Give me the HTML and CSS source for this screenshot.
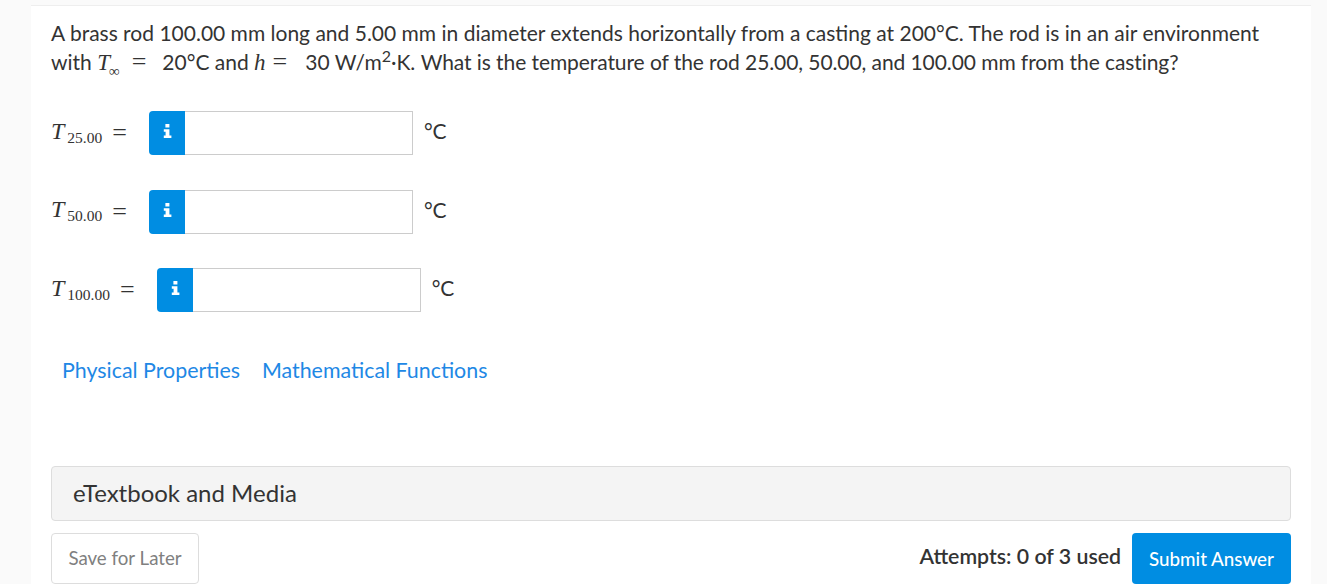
FILE: index.html
```html
<!DOCTYPE html>
<html lang="en">
<head>
    <meta charset="UTF-8">
    <meta name="viewport" content="width=device-width, initial-scale=1.0">
    <title>Question</title>
    <link rel="stylesheet" href="styles.css">
</head>
<body>
    <div class="question-card">
        <p class="question-text">A brass rod 100.00 mm long and 5.00 mm in diameter extends horizontally from a casting at 200°C. The rod is in an air environment<br>with <span class="math"><i>T</i><sub class="inf">∞</sub></span><span class="eq">=</span>20°C and <i class="math">h</i><span class="eq eq-h">=</span>30 W/m<sup>2</sup>·K. <span class="tail">What is the temperature of the rod 25.00, 50.00, and 100.00 mm from the casting?</span></p>

        <div class="answers">
            <div class="answer-row">
                <span class="label"><i>T</i><sub>25.00</sub></span>
                <span class="label-eq">=</span>
                <button class="info-btn"><svg viewBox="0 0 9 14" width="9" height="14"><path d="M2.4 0h4v3.4h-4zM.8 5.2h5.6v6.3h2v2.5H.8v-2.5h1.8V7.7H.8z" fill="#fff"/></svg></button>
                <input class="answer-input" type="text">
                <span class="unit">°C</span>
            </div>
            <div class="answer-row">
                <span class="label"><i>T</i><sub>50.00</sub></span>
                <span class="label-eq">=</span>
                <button class="info-btn"><svg viewBox="0 0 9 14" width="9" height="14"><path d="M2.4 0h4v3.4h-4zM.8 5.2h5.6v6.3h2v2.5H.8v-2.5h1.8V7.7H.8z" fill="#fff"/></svg></button>
                <input class="answer-input" type="text">
                <span class="unit">°C</span>
            </div>
            <div class="answer-row">
                <span class="label"><i>T</i><sub>100.00</sub></span>
                <span class="label-eq">=</span>
                <button class="info-btn"><svg viewBox="0 0 9 14" width="9" height="14"><path d="M2.4 0h4v3.4h-4zM.8 5.2h5.6v6.3h2v2.5H.8v-2.5h1.8V7.7H.8z" fill="#fff"/></svg></button>
                <input class="answer-input" type="text">
                <span class="unit">°C</span>
            </div>
        </div>

        <div class="links">
            <a href="#">Physical Properties</a>
            <a href="#">Mathematical Functions</a>
        </div>

        <div class="media-panel">eTextbook and Media</div>

        <div class="footer">
            <button class="save-btn">Save for Later</button>
            <div class="submit-group">
                <span class="attempts">Attempts: 0 of 3 used</span>
                <button class="submit-btn">Submit Answer</button>
            </div>
        </div>
    </div>
</body>
</html>
```

FILE: styles.css
```css
* {
    margin: 0;
    padding: 0;
    box-sizing: border-box;
}

html, body {
    height: 584px;
    overflow: hidden;
}

body {
    background: #fafafa;
    font-family: Lato, sans-serif;
    color: #333;
    padding: 5px 16px 0 31px;
}

.question-card {
    background: #fff;
    border-top: 1px solid #eee;
    padding: 12px 20px 0;
    height: 579px;
}

.question-text {
    font-size: 21px;
    line-height: 29px;
    white-space: nowrap;
}

.question-text sup {
    font-size: 16px;
    line-height: 0;
}

.tail {
    letter-spacing: -0.08px;
}

.math {
    font-family: "Liberation Serif", serif;
    font-size: 23px;
}

.inf {
    font-size: 15px;
    line-height: 0;
    margin-left: -1px;
}

.eq {
    font-family: "Liberation Serif", serif;
    font-size: 26px;
    line-height: 0;
    margin: 0 16px 0 12px;
}

.eq-h {
    margin: 0 18px 0 7px;
}

.answers {
    margin-top: 34px;
}

.answer-row {
    display: flex;
    align-items: center;
    height: 44px;
    margin-bottom: 34.5px;
}

.label {
    font-family: "Liberation Serif", serif;
    font-size: 24px;
    white-space: nowrap;
    padding-bottom: 4px;
}

.label sub {
    font-size: 15.5px;
    line-height: 0;
    margin-left: 3px;
    vertical-align: -4px;
}

.label-eq {
    font-family: "Liberation Serif", serif;
    font-size: 26px;
    margin: 0 22px 0 10px;
}

.info-btn {
    width: 36px;
    height: 44px;
    border: none;
    background: #008de2;
    border-radius: 4px 0 0 4px;
    display: flex;
    align-items: center;
    justify-content: center;
}

.info-btn svg {
    margin: 0 0 4px 1px;
}

.answer-input {
    width: 228px;
    height: 44px;
    border: 1px solid #ccc;
    border-left: none;
    background: #fff;
}

.unit {
    font-size: 21px;
    margin-left: 11px;
    padding-bottom: 5px;
}

.links {
    margin-top: 43.5px;
    padding-left: 11px;
    display: flex;
    gap: 22px;
    font-size: 21.4px;
    line-height: 28px;
}

.links a {
    color: #1e88e5;
    text-decoration: none;
}

.media-panel {
    margin-top: 82px;
    height: 55px;
    background: #f4f4f4;
    border: 1px solid #ddd;
    border-radius: 4px;
    padding-left: 21px;
    font-size: 24px;
    line-height: 52px;
}

.footer {
    margin-top: 12px;
    display: flex;
    justify-content: space-between;
    align-items: center;
}

.save-btn {
    width: 148px;
    height: 51px;
    background: #fff;
    border: 1px solid #ddd;
    border-radius: 4px;
    font-family: Lato, sans-serif;
    font-size: 18.7px;
    color: #808080;
}

.submit-group {
    display: flex;
    align-items: center;
    gap: 11px;
}

.attempts {
    font-size: 21.3px;
    font-weight: 600;
    color: #333;
    margin-bottom: 4px;
}

.submit-btn {
    width: 159px;
    height: 51px;
    background: #008de2;
    border: none;
    border-radius: 4px;
    font-family: Lato, sans-serif;
    font-size: 18.75px;
    font-weight: 500;
    color: #fff;
}
```
